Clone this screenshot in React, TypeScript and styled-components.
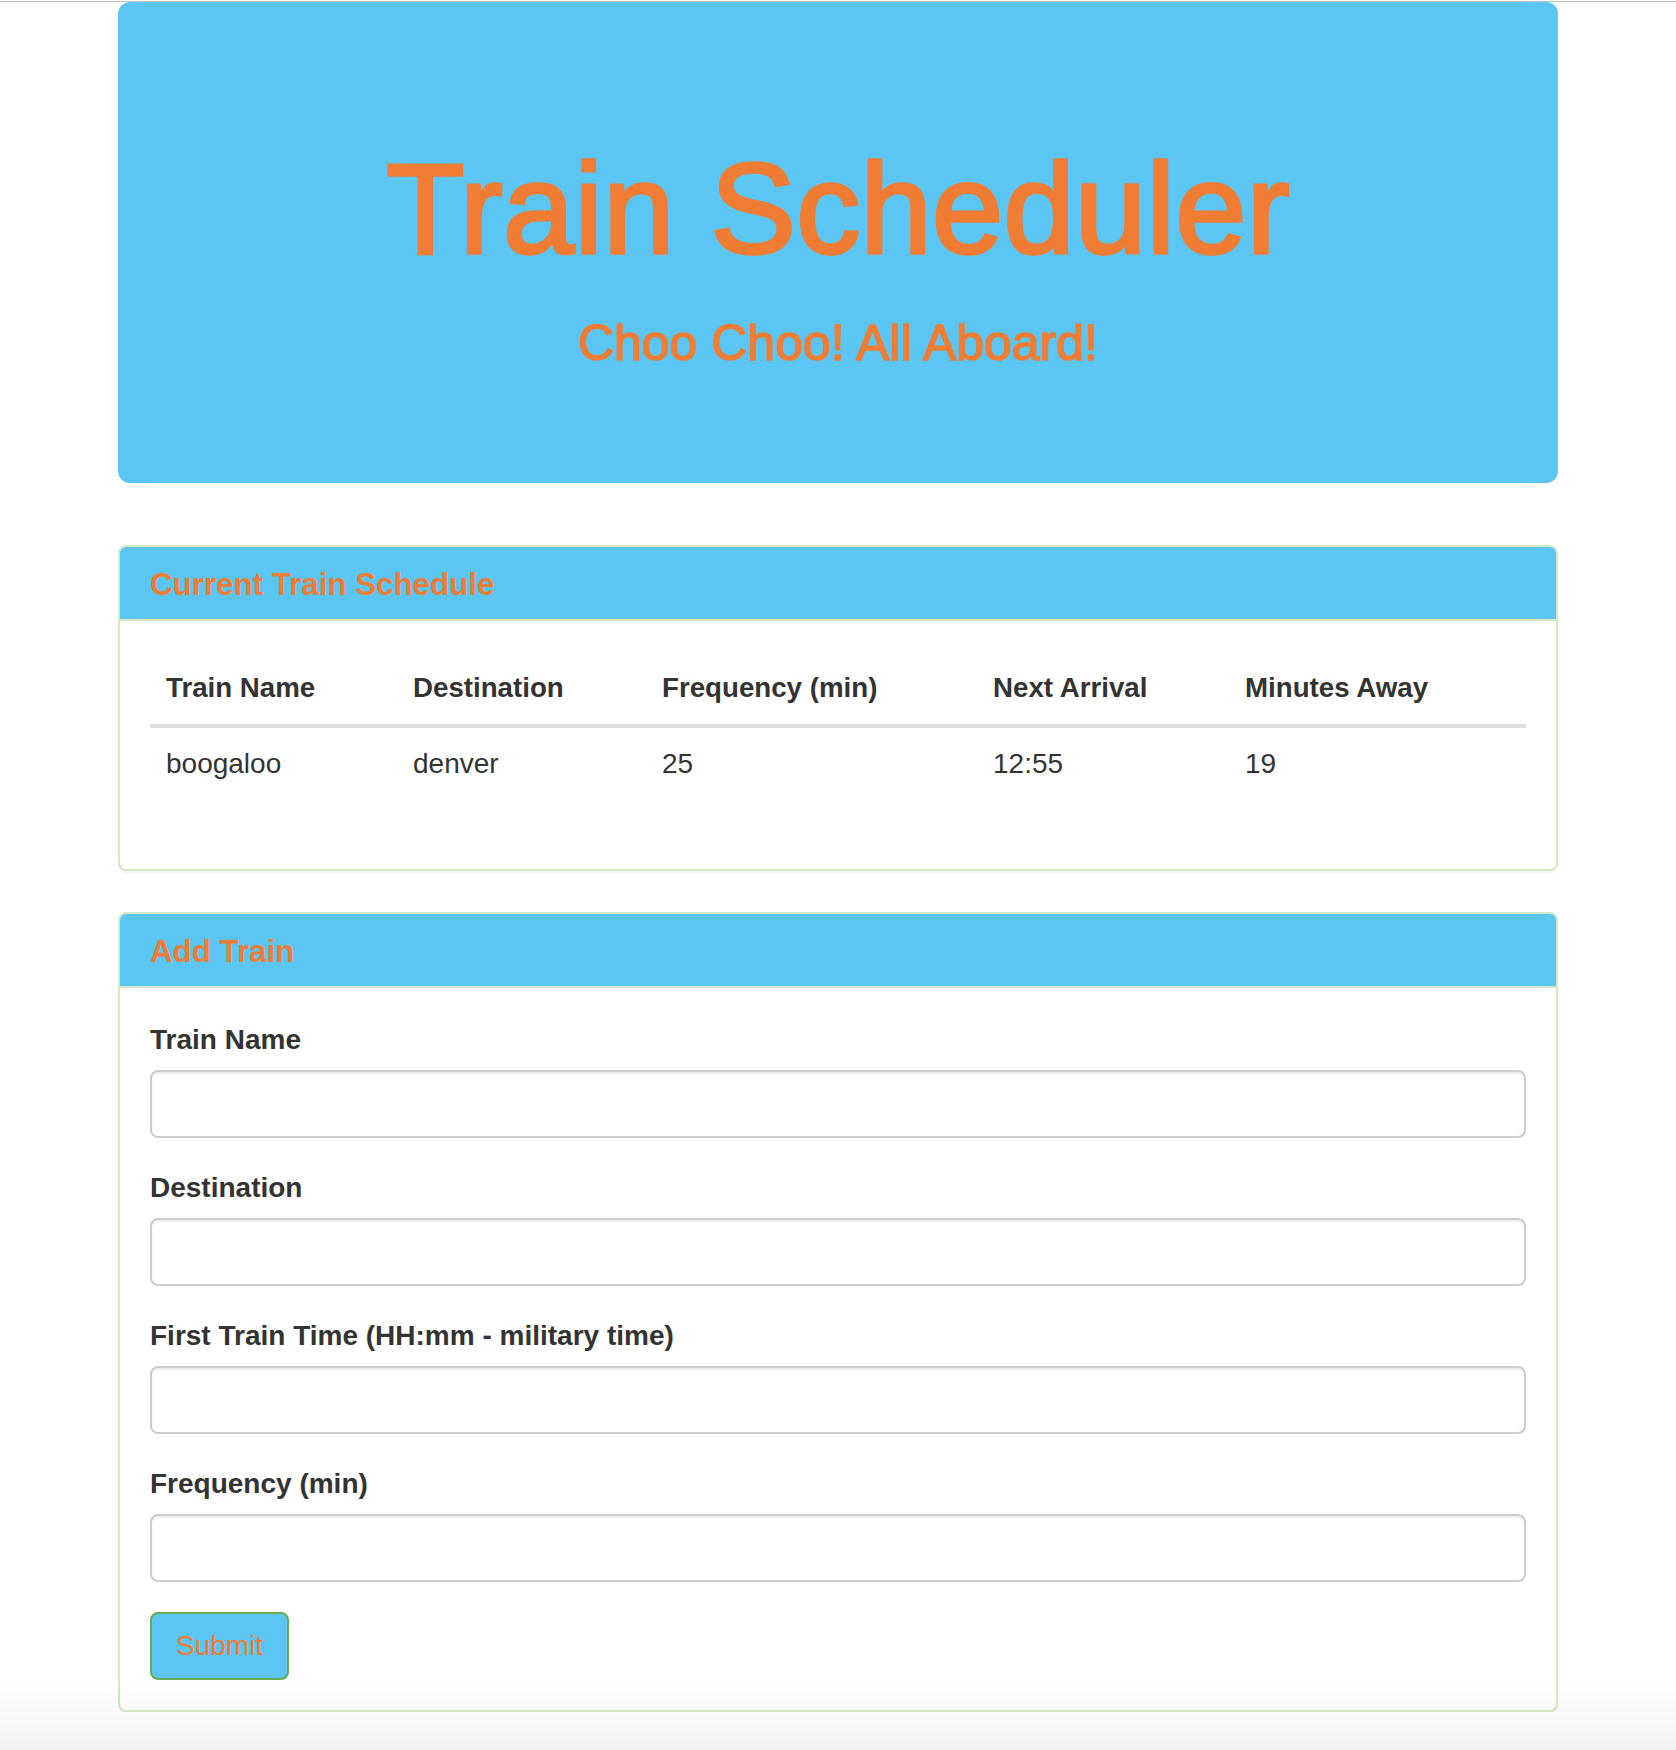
import React from "react";
import styled, { createGlobalStyle } from "styled-components";

const BLUE = "#5bc6f4";
const ORANGE = "#f07d33";
const PANEL_BORDER = "#d6e9c6";

const GlobalStyle = createGlobalStyle`
  html, body {
    margin: 0;
    padding: 0;
    background: #ffffff;
  }
  body {
    font-family: "Liberation Sans", Arial, Helvetica, sans-serif;
    font-size: 28px;
    line-height: 40px;
    color: #333333;
  }
  * {
    box-sizing: border-box;
  }
`;

const Page = styled.div`
  margin-top: 1px;
  border-top: 1px solid #c2c2c2;
`;

const Container = styled.div`
  width: 1440px;
  margin: 0 auto;
`;

const Jumbotron = styled.header`
  background: ${BLUE};
  border-radius: 12px;
  padding: 137px 120px 112px;
  margin-bottom: 62px;
  text-align: center;
  display: flex;
  flex-direction: column;
  align-items: center;
`;

const Title = styled.h1`
  margin: 0;
  font-size: 128px;
  line-height: 140.8px;
  font-weight: 400;
  letter-spacing: 0.3px;
  color: ${ORANGE};
  -webkit-text-stroke: 3.5px ${ORANGE};
`;

const Subtitle = styled.h3`
  margin: 36px 0 0;
  font-size: 49.6px;
  line-height: 55px;
  font-weight: 400;
  letter-spacing: 0.2px;
  color: ${ORANGE};
  -webkit-text-stroke: 1.6px ${ORANGE};
`;

const Panel = styled.section`
  background: #ffffff;
  border: 2px solid ${PANEL_BORDER};
  border-radius: 8px;
  box-shadow: 0 2px 2px rgba(0, 0, 0, 0.05);
  margin-bottom: 41px;
  &:last-child {
    margin-bottom: 0;
  }
`;

const PanelHeading = styled.div`
  background: ${BLUE};
  border-bottom: 2px solid ${PANEL_BORDER};
  border-radius: 6px 6px 0 0;
  padding: 20px 30px 17px;
`;

const PanelTitle = styled.h3`
  margin: 0;
  font-size: 31.3px;
  line-height: 35px;
  font-weight: 700;
  color: ${ORANGE};
`;

const PanelBody = styled.div<{ $top?: number }>`
  padding: ${(p) => p.$top ?? 30}px 30px 30px;
`;

const Table = styled.table`
  width: 100%;
  table-layout: fixed;
  border-collapse: collapse;
  border-spacing: 0;
  margin-bottom: 40px;
`;

const Col = styled.col<{ $width: number }>`
  width: ${(p) => p.$width}px;
`;

const Th = styled.th`
  text-align: left;
  vertical-align: bottom;
  padding: 17px 16px 16px;
  font-weight: 700;
  font-size: 27.7px;
  line-height: 40px;
  border-bottom: 4px solid #dddddd;
  white-space: nowrap;
`;

const Td = styled.td`
  padding: 16px 16px 15px;
  line-height: 40px;
  vertical-align: top;
`;

const Form = styled.form`
  display: flex;
  flex-direction: column;
  align-items: flex-start;
`;

const FormGroup = styled.div`
  width: 100%;
  margin-bottom: 30px;
`;

const Label = styled.label`
  display: block;
  font-weight: 700;
  line-height: 40px;
  margin-bottom: 10px;
`;

const Input = styled.input`
  display: block;
  width: 100%;
  height: 68px;
  padding: 12px 24px;
  font-family: inherit;
  font-size: 28px;
  line-height: 40px;
  color: #555555;
  background: #ffffff;
  border: 2px solid #cccccc;
  border-radius: 8px;
  box-shadow: inset 0 2px 2px rgba(0, 0, 0, 0.075);
  outline: none;
`;

const SubmitButton = styled.button`
  display: inline-block;
  padding: 12px 24px;
  font-family: inherit;
  font-size: 28px;
  line-height: 40px;
  color: ${ORANGE};
  background: ${BLUE};
  border: 2px solid #64ad52;
  border-radius: 8px;
  cursor: pointer;
`;

const BottomShade = styled.div`
  position: fixed;
  left: 0;
  right: 0;
  bottom: 0;
  height: 68px;
  pointer-events: none;
  background: linear-gradient(to bottom, rgba(0, 0, 0, 0), rgba(0, 0, 0, 0.05));
`;

const columns = [
  { label: "Train Name", width: 247 },
  { label: "Destination", width: 249 },
  { label: "Frequency (min)", width: 331 },
  { label: "Next Arrival", width: 252 },
  { label: "Minutes Away", width: 297 },
];

const trains = [
  { name: "boogaloo", destination: "denver", frequency: "25", next: "12:55", away: "19" },
];

const fields = [
  { id: "train-name", label: "Train Name" },
  { id: "destination", label: "Destination" },
  { id: "first-train", label: "First Train Time (HH:mm - military time)" },
  { id: "frequency", label: "Frequency (min)" },
];

export default function App() {
  return (
    <>
      <GlobalStyle />
      <Page>
        <Container>
          <Jumbotron>
            <Title>Train Scheduler</Title>
            <Subtitle>Choo Choo! All Aboard!</Subtitle>
          </Jumbotron>

          <Panel>
            <PanelHeading>
              <PanelTitle>Current Train Schedule</PanelTitle>
            </PanelHeading>
            <PanelBody>
              <Table>
                <colgroup>
                  {columns.map((c) => (
                    <Col key={c.label} $width={c.width} />
                  ))}
                </colgroup>
                <thead>
                  <tr>
                    {columns.map((c) => (
                      <Th key={c.label}>{c.label}</Th>
                    ))}
                  </tr>
                </thead>
                <tbody>
                  {trains.map((t) => (
                    <tr key={t.name}>
                      <Td>{t.name}</Td>
                      <Td>{t.destination}</Td>
                      <Td>{t.frequency}</Td>
                      <Td>{t.next}</Td>
                      <Td>{t.away}</Td>
                    </tr>
                  ))}
                </tbody>
              </Table>
            </PanelBody>
          </Panel>

          <Panel>
            <PanelHeading>
              <PanelTitle>Add Train</PanelTitle>
            </PanelHeading>
            <PanelBody $top={32}>
              <Form onSubmit={(e) => e.preventDefault()}>
                {fields.map((f) => (
                  <FormGroup key={f.id}>
                    <Label htmlFor={f.id}>{f.label}</Label>
                    <Input id={f.id} type="text" />
                  </FormGroup>
                ))}
                <SubmitButton type="submit">Submit</SubmitButton>
              </Form>
            </PanelBody>
          </Panel>
        </Container>
      </Page>
      <BottomShade />
    </>
  );
}
